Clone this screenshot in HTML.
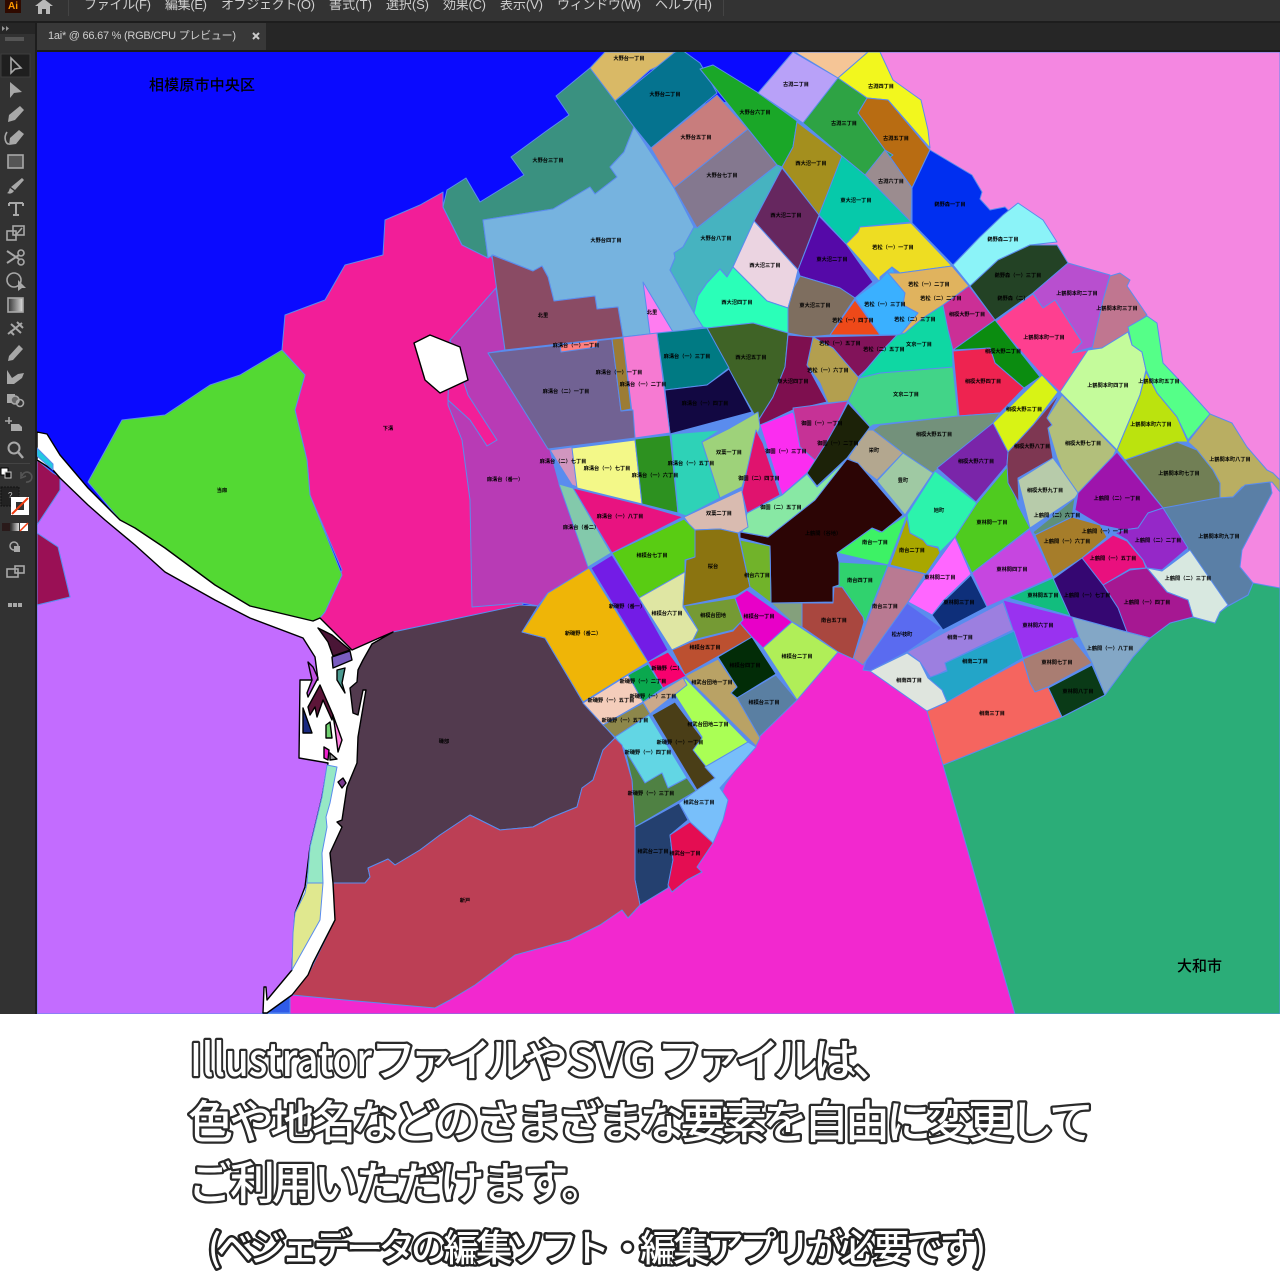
<!DOCTYPE html>
<html lang="ja"><head><meta charset="utf-8"><title>map</title>
<style>
html,body{margin:0;padding:0;background:#fff}
body{width:1280px;height:1280px;overflow:hidden;position:relative;font-family:"Liberation Sans","Noto Sans CJK JP",sans-serif}
svg{position:absolute;left:0;top:0;display:block}
.m polygon{stroke:#5a8cee;stroke-width:1;stroke-linejoin:round}
.l text{font-size:5.2px;fill:#000;text-anchor:middle;font-family:"Noto Sans CJK JP",sans-serif;font-weight:700}
.r polygon{stroke:#000;stroke-width:1.4;stroke-linejoin:round}
.t text{font-family:"Noto Sans CJK JP",sans-serif;font-weight:500;fill:#fff;stroke:#2a2a2a;stroke-width:4.6;paint-order:stroke fill;stroke-linejoin:round;font-size:45px}
.t .b{font-size:37px;stroke:#222;stroke-width:5}
.mn text{font-size:13px;fill:#cfcfcf;font-family:"Liberation Sans","Noto Sans CJK JP",sans-serif}
.ic *{fill:none;stroke:#a8a8a8;stroke-width:1.6}
.ic .f{fill:#a8a8a8;stroke:none}
</style></head><body>
<svg width="1280" height="1280" viewBox="0 0 1280 1280" xmlns="http://www.w3.org/2000/svg">
<rect x="37" y="52" width="1243" height="962" fill="#0a0aff"/>
<g class="m">
<polygon fill="#f487e1" stroke="none" points="838,52 1280,52 1280,610 1100,610 900,200"/>
<polygon fill="#f228cf" stroke="none" points="830,640 900,640 990,740 1016,1014 262,1014 262,900 600,720"/>
<polygon fill="#2bad78" points="943,765 1062,717 1105,695 1133,657 1150,638 1170,623 1193,617 1215,623 1220,612 1228,606 1248,595 1253,583 1280,588 1280,1014 1015,1014"/>
<polygon fill="#c36cff" points="37,605 70,597 58,547 37,533 37,525 60,490 60,478 88,505 105,520 135,545 165,572 215,600 250,618 303,638 315,657 318,680 300,680 299,758 328,763 322,797 310,847 305,887 295,913 292,970 267,1000 262,1014 37,1014"/>
<polygon fill="#9a1055" points="37,460 53,473 60,477 60,490 37,525"/>
<polygon fill="#9a1055" points="37,533 58,547 70,597 37,605"/>
<polygon fill="#f21e98" points="443,192 420,205 385,220 383,255 345,265 325,300 285,315 282,350 305,375 295,410 307,460 310,495 342,570 325,610 320,618 325,623 352,650 370,642 393,632 450,620 522,605 560,560 470,440 512,300 488,250 462,245 443,207"/>
<polygon fill="#5a8cee" stroke="none" points="620,110 760,100 800,110 900,170 930,210 1000,240 1060,270 1120,300 1150,370 1195,430 1210,470 1210,510 1230,580 1150,630 1100,680 1000,720 930,700 860,660 838,648 800,695 760,735 725,785 700,850 660,880 640,830 625,760 590,700 530,632 560,590 560,500 500,360 510,300 520,230 560,150"/>
<polygon fill="#53d933" points="122,420 165,415 210,385 240,375 282,350 305,375 295,410 307,460 310,495 342,575 325,612 320,618 313,621 250,606 215,585 165,548 135,528 120,520 88,482"/>
<polygon fill="#b83bb5" points="450,340 496,288 505,350 488,353 550,450 559,483 589,568 548,593 538,606 522,603 472,607 470,500 462,440 448,405"/>
<polygon fill="#f21e98" stroke="none" points="450,340 468,395 497,440 487,446 470,420 448,400"/>
<polygon fill="#d9b966" points="590,68 605,52 675,52 672,60 650,70 615,101"/>
<polygon fill="#3a9180" points="590,68 556,96 569,115 545,132 511,157 524,175 480,202 466,178 447,190 443,207 462,245 488,258 483,220 553,209 590,187 595,194 617,177 610,167 624,152 634,127 615,101"/>
<polygon fill="#05738f" points="615,101 675,52 682,50 700,63 717,93 651,148 634,127"/>
<polygon fill="#c87d7d" points="651,148 717,95 748,129 674,188"/>
<polygon fill="#84788f" points="674,188 748,129 777,165 697,228"/>
<polygon fill="#1aa728" points="700,69 713,65 757,92 797,121 793,147 782,167 777,165"/>
<polygon fill="#76b3df" points="483,220 553,209 590,187 595,194 617,177 610,167 624,152 634,127 674,188 694,227 683,247 674,253 675,258 670,270 693,310 703,327 673,332 650,334 623,337 618,307 597,309 595,296 554,301 548,277 542,266 533,271 493,255 488,258"/>
<polygon fill="#8a4b64" points="492,255 533,271 542,266 548,277 554,301 595,296 597,309 618,307 623,337 505,350"/>
<polygon fill="#ff7cf0" points="643,282 650,334 673,332"/>
<polygon fill="#46b3c0" points="782,168 754,221 733,267 727,277 720,269 707,283 698,296 694,313 670,270 675,258 674,253 683,247 694,227 697,228 777,165"/>
<polygon fill="#66275f" points="782,168 819,215 798,270 754,221"/>
<polygon fill="#a48f1e" points="797,122 842,156 830,187 819,215 782,167 793,147"/>
<polygon fill="#b8a1f8" points="758,93 793,52 838,78 803,123"/>
<polygon fill="#f5c596" points="795,52 868,52 838,78"/>
<polygon fill="#f2f71e" points="838,78 868,52 880,52 893,80 921,100 928,130 930,148 888,100 867,98"/>
<polygon fill="#b86c12" points="858,113 867,98 888,100 930,150 912,188 885,150"/>
<polygon fill="#2ea344" points="803,123 838,78 867,98 858,113 885,150 893,155 865,175 842,156"/>
<polygon fill="#9b8c8f" points="865,175 885,150 912,188 911,222"/>
<polygon fill="#06c9aa" points="842,156 865,175 911,222 880,225 860,227 858,232 846,244 819,215 830,187"/>
<polygon fill="#eedd22" points="846,244 858,232 860,227 911,223 952,266 900,273 892,267 880,277 880,282"/>
<polygon fill="#5509a8" points="819,216 846,244 873,282 855,298 840,288 800,276 798,270"/>
<polygon fill="#ebd4e1" points="754,221 798,270 794,287 788,308 767,301 733,267"/>
<polygon fill="#2affb8" points="733,267 767,301 788,308 788,333 753,323 707,328 703,327 694,313 698,296 707,283 720,269 727,277"/>
<polygon fill="#7e6e5f" points="800,276 840,288 855,298 830,335 808,337 788,333 788,308 794,287"/>
<polygon fill="#3ab0ff" points="855,298 880,280 892,267 905,293 903,305 918,313 900,335 880,335"/>
<polygon fill="#ee4919" points="855,300 880,335 830,335"/>
<polygon fill="#e0b35e" points="888,273 900,273 952,266 969,286 943,305 923,318 905,333 900,335 918,313 903,305 905,293"/>
<polygon fill="#82135a" points="813,337 900,335 880,355 873,363 857,378 830,347"/>
<polygon fill="#b39f4f" points="813,337 833,348 859,378 848,401 828,403 820,383 807,365"/>
<polygon fill="#3f6326" points="707,328 753,323 788,333 785,367 773,397 758,421 728,368"/>
<polygon fill="#7e0f4f" points="788,335 813,337 807,365 827,402 793,410 759,426 758,421 773,397 785,367"/>
<polygon fill="#007a83" points="657,333 707,328 729,368 707,385 665,390"/>
<polygon fill="#120842" points="665,390 707,385 729,369 752,412 670,434"/>
<polygon fill="#f67ad2" points="623,337 657,333 670,433 635,438"/>
<polygon fill="#716293" points="488,353 612,339 621,411 633,410 635,438 548,449"/>
<polygon fill="#9c7c34" points="612,339 623,338 631,409 621,411"/>
<polygon fill="#ff7f7f" stroke="none" points="560,345 598,340 597,347 561,352"/>
<polygon fill="#42d488" points="848,401 859,378 880,373 953,367 958,416 873,425 870,427"/>
<polygon fill="#0fd7a3" points="943,305 952,330 953,367 880,373 859,378 880,353 897,335 905,333 923,318"/>
<polygon fill="#002ff0" points="930,150 972,175 982,192 980,199 990,210 1005,207 1010,212 980,237 953,265 912,223 912,188"/>
<polygon fill="#8bf3f8" points="953,265 980,237 1003,215 1018,203 1043,220 1057,242 1030,245 998,260 970,286"/>
<polygon fill="#234225" points="970,286 998,260 1030,245 1057,245 1068,263 1033,293 995,320"/>
<polygon fill="#b84fcf" points="1068,263 1110,275 1103,300 1093,347 1072,353 1082,342 1055,300 1043,308 1033,293"/>
<polygon fill="#c07690" points="1110,276 1120,273 1130,280 1127,286 1147,315 1128,332 1102,348 1092,349 1103,300"/>
<polygon fill="#fe3f90" points="995,322 1033,294 1043,308 1055,300 1082,342 1072,353 1088,350 1060,392 1042,375"/>
<polygon fill="#cb2f96" points="943,305 969,286 995,320 953,350 948,330"/>
<polygon fill="#0b8c10" points="953,350 995,320 1040,377 1024,388 995,363 990,348"/>
<polygon fill="#ee2350" points="953,351 990,348 995,363 1024,388 1000,413 959,416"/>
<polygon fill="#d8f315" points="1042,375 1058,392 1033,425 1008,452 993,423"/>
<polygon fill="#73917b" points="880,425 958,416 1000,413 993,423 933,473 903,453 873,430"/>
<polygon fill="#b3a78f" points="867,430 873,430 903,453 877,480 848,458"/>
<polygon fill="#9fc9a3" points="903,453 933,473 905,515 877,481"/>
<polygon fill="#2cf3ac" points="935,471 977,503 955,537 940,552 938,547 927,545 923,540 910,533 907,515"/>
<polygon fill="#7a25a9" points="993,423 1008,452 1007,465 976,502 937,468"/>
<polygon fill="#4fcb1f" points="1007,467 1018,505 1030,528 972,573 955,537 977,503"/>
<polygon fill="#7e3752" points="1008,452 1033,425 1060,393 1047,418 1052,425 1048,428 1053,458 1018,478 1019,503 1008,483 1007,465"/>
<polygon fill="#b2bf7b" points="1062,395 1116,450 1107,470 1078,493 1062,470 1057,458 1048,428 1052,425 1047,418"/>
<polygon fill="#c4fb9b" points="1060,392 1088,350 1102,348 1128,332 1132,345 1142,352 1146,370 1140,395 1117,450"/>
<polygon fill="#55ff88" points="1128,327 1147,316 1157,323 1163,363 1182,383 1210,414 1188,440 1177,417 1157,393 1146,370 1142,352 1132,345"/>
<polygon fill="#bbe30e" points="1146,372 1157,393 1177,417 1188,442 1177,442 1125,460 1117,450 1140,395"/>
<polygon fill="#717f55" points="1125,460 1177,442 1197,450 1213,470 1220,483 1220,500 1163,508"/>
<polygon fill="#b9ae62" points="1188,442 1210,414 1232,423 1247,447 1267,470 1273,473 1280,480 1280,492 1272,482 1242,487 1233,497 1220,498 1220,483 1213,470 1197,450"/>
<polygon fill="#5a7fa6" points="1163,508 1217,498 1233,497 1245,485 1270,482 1272,493 1263,510 1242,550 1240,567 1253,583 1248,595 1228,606 1188,550"/>
<polygon fill="#b7cbaa" points="1018,480 1053,458 1062,470 1078,493 1077,495 1075,498 1030,528"/>
<polygon fill="#5f9079" points="1033,532 1075,498 1072,517 1035,535"/>
<polygon fill="#9e14ac" points="1117,452 1163,508 1148,513 1138,528 1123,530 1100,525 1075,510 1078,493"/>
<polygon fill="#9528c8" points="1163,508 1188,548 1162,570 1147,568 1143,560 1127,540 1115,533 1123,530 1138,528 1148,513"/>
<polygon fill="#d8e8e0" points="1190,550 1228,605 1220,612 1215,623 1193,617 1188,600 1167,592 1147,568 1162,571"/>
<polygon fill="#a61892" points="1147,568 1167,592 1188,600 1193,617 1170,623 1150,638 1127,632 1118,608 1103,585 1130,570"/>
<polygon fill="#e9107e" points="1082,558 1113,535 1127,541 1143,560 1146,568 1130,569 1103,585"/>
<polygon fill="#a67d2a" points="1035,535 1072,517 1100,525 1107,537 1082,558 1053,577"/>
<polygon fill="#350772" points="1053,579 1082,558 1103,585 1118,608 1127,632 1070,617"/>
<polygon fill="#c646e0" points="972,573 1030,529 1053,577 987,607"/>
<polygon fill="#12bd7e" points="1008,598 1053,578 1070,616"/>
<polygon fill="#9932f0" points="1003,600 1072,617 1079,637 1023,658 1013,630"/>
<polygon fill="#a97d72" points="1023,659 1072,638 1092,663 1048,687 1035,692 1030,683"/>
<polygon fill="#0a3a17" points="1048,688 1092,665 1105,695 1062,717"/>
<polygon fill="#83a7c6" points="1072,617 1127,632 1150,638 1133,657 1105,695 1092,663 1079,637"/>
<polygon fill="#9c7fe0" points="907,652 1003,602 1013,630 945,663 947,670 931,678 920,662"/>
<polygon fill="#23a5c8" points="928,678 947,671 945,663 1014,631 1023,658 985,680 947,702 942,690"/>
<polygon fill="#f5655f" points="927,711 947,702 985,680 1023,660 1030,683 1035,692 1048,687 1062,717 943,765"/>
<polygon fill="#dfe5de" points="870,671 907,653 920,662 928,678 942,690 947,702 927,711"/>
<polygon fill="#5a6bf0" points="863,670 868,655 907,603 942,628 907,652 870,671"/>
<polygon fill="#0e2f7a" points="932,615 943,602 971,575 987,607 943,630"/>
<polygon fill="#ff66ff" points="908,602 955,537 971,574 943,601 932,615"/>
<polygon fill="#b97a92" points="853,658 888,566 925,574 908,602 863,665"/>
<polygon fill="#a9a700" points="890,565 907,518 910,533 923,540 927,545 938,548 940,553 926,574"/>
<polygon fill="#3df265" points="837,553 872,528 880,532 907,515 888,565"/>
<polygon fill="#30d26e" points="839,562 888,565 865,623 863,617 842,587 835,587"/>
<polygon fill="#a9473f" points="802,603 833,603 834,587 842,587 863,617 864,622 853,659 838,652 802,627"/>
<polygon fill="#2c0505" points="740,532 768,537 815,500 847,459 858,463 903,515 882,532 872,528 837,553 839,562 839,585 833,587 833,602 771,603 770,546 740,538"/>
<polygon fill="#88e8a4" points="742,532 747,513 782,495 807,474 817,487 847,459 815,500 768,537"/>
<polygon fill="#d9bbb0" points="684,517 742,490 748,527 738,533 720,529 693,530"/>
<polygon fill="#d196bf" points="550,450 572,447 577,487 572,485"/>
<polygon fill="#f3f888" points="572,448 635,440 642,504 577,488"/>
<polygon fill="#2d9120" points="635,439 670,435 678,513 642,504"/>
<polygon fill="#2ed2b7" points="671,434 720,430 702,442 720,498 686,516 678,513"/>
<polygon fill="#9ed27a" points="702,442 730,428 758,412 760,427 742,487 720,498"/>
<polygon fill="#e0136e" points="756,430 763,443 780,495 747,513 742,492"/>
<polygon fill="#fb2df0" points="760,425 793,412 800,430 817,462 807,473 782,495"/>
<polygon fill="#c63296" points="793,408 848,401 838,422 825,447 817,462 800,447"/>
<polygon fill="#1c2208" points="848,403 870,427 847,458 817,486 807,473 825,445 838,422"/>
<polygon fill="#e81380" points="573,488 642,505 683,517 612,553"/>
<polygon fill="#83c9ab" points="559,484 573,488 611,553 588,567"/>
<polygon fill="#59cc13" points="612,553 684,519 695,530 695,557 685,560 685,572 639,598"/>
<polygon fill="#731ce6" points="591,568 612,555 639,598 668,650 648,662"/>
<polygon fill="#dfe6a3" points="639,598 685,572 683,607 698,630 693,640 672,650"/>
<polygon fill="#8b7410" points="695,530 720,529 738,533 750,587 737,595 683,606 686,560 695,557"/>
<polygon fill="#759a34" points="684,606 735,598 743,620 733,630 693,640 698,630"/>
<polygon fill="#523a4e" points="393,632 450,620 520,605 538,606 522,632 545,638 583,702 615,738 603,750 593,780 582,788 577,807 550,818 533,827 500,830 470,815 440,835 420,850 395,865 388,859 368,868 370,877 365,883 333,883 330,853 337,822 342,820 347,787 357,763 358,737 366,690 358,715 353,713 350,688 357,682 358,670 363,660 372,644"/>
<polygon fill="#efb507" points="522,632 548,593 589,568 648,662 583,702 545,638"/>
<polygon fill="#bc5030" points="672,650 693,641 733,631 740,623 752,637 685,675"/>
<polygon fill="#e800c8" points="735,598 747,590 792,622 763,648 752,637 740,623 743,620"/>
<polygon fill="#84a07c" points="771,603 802,603 802,627 792,622"/>
<polygon fill="#71b32a" points="740,540 770,546 771,603 750,587"/>
<polygon fill="#b0ee58" points="763,648 792,622 838,652 797,700"/>
<polygon fill="#022c07" points="718,657 752,637 776,674 737,698 731,693 737,687"/>
<polygon fill="#5a7fa2" points="737,698 776,675 797,700 758,738"/>
<polygon fill="#b9a265" points="685,676 718,659 737,687 731,693 737,698 760,738 756,746"/>
<polygon fill="#aaff55" points="685,678 748,742 705,767 693,750 702,737 675,695"/>
<polygon fill="#cba98a" points="643,702 683,678 687,685 650,714"/>
<polygon fill="#4a3e17" points="652,715 675,702 702,738 693,750 715,778 697,790"/>
<polygon fill="#f8006e" points="648,662 668,652 686,676 663,688"/>
<polygon fill="#0aa84e" points="628,675 648,664 663,688 643,702"/>
<polygon fill="#f4cdbb" points="583,703 628,675 643,702 603,725"/>
<polygon fill="#8d874b" points="603,725 643,703 650,714 615,737"/>
<polygon fill="#62d6e4" points="615,737 649,715 687,778 668,788 662,773 645,783 625,750"/>
<polygon fill="#4f8143" points="625,750 645,783 662,773 668,788 687,778 696,791 635,827 632,780"/>
<polygon fill="#78bffa" points="705,767 748,742 756,747 720,788 728,800 723,820 713,843 690,822 679,803 697,790 715,778"/>
<polygon fill="#24406f" points="635,827 679,803 688,820 670,835 673,860 668,888 640,905 635,880"/>
<polygon fill="#e40d52" points="670,835 690,822 713,843 697,867 702,872 687,880 672,892 668,885 673,860"/>
<polygon fill="#bc3f55" points="333,883 365,883 370,877 368,868 388,859 395,865 420,850 440,835 470,815 500,830 533,827 550,818 577,807 582,788 593,780 603,750 615,738 622,745 632,780 635,827 635,880 640,905 628,918 622,910 600,925 570,940 515,955 475,985 450,1000 435,1008 345,1000 292,995 308,975 335,920"/>
<polygon fill="#2f5be8" points="290,995 267,1013 290,1013"/>
</g>
<g class="r">
<polygon fill="#fff" points="37,432 47,434 60,455 88,488 120,520 135,528 165,548 215,585 250,606 313,621 320,618 325,623 352,650 370,642 393,632 372,644 363,660 358,670 357,682 350,688 353,713 358,715 363,690 366,690 358,737 357,763 347,787 342,820 337,822 342,827 330,853 333,883 335,920 313,963 308,975 292,995 267,1013 263,1013 264,987 266,987 267,1000 292,970 295,913 305,887 310,847 322,797 328,763 299,758 300,680 318,680 315,657 303,638 250,618 215,600 165,572 135,545 105,520 88,505 60,478 53,470 37,460"/>
<polygon fill="#fff" points="414,343 430,335 460,347 468,380 440,393 425,380"/>
</g>
<g class="m">
<polygon fill="#96e8c5" points="327,765 337,767 330,803 326,817 327,827 322,853 323,883 307,883 310,847 322,797"/>
<polygon fill="#e0e88f" points="307,883 323,883 320,920 292,970 293,933 295,913 305,893"/>
<polygon fill="#22c8e0" stroke="none" points="37,448 53,464 53,470 37,456"/>
</g>
<g class="r" style="stroke-width:1">
<polygon fill="#4a1536" points="318,628 332,635 350,650 333,656 328,642"/>
<polygon fill="#7a5cc0" points="332,657 350,651 352,660 333,668"/>
<polygon fill="#4b9a90" points="337,670 345,668 342,683 345,693 337,680"/>
<polygon fill="#c050e0" points="308,662 313,667 318,678 308,697 307,693 312,680"/>
<polygon fill="#5c1538" points="320,685 333,715 332,720 323,700 317,717 315,707 310,715 308,707"/>
<polygon fill="#ff80e0" points="333,715 342,740 338,752 335,728"/>
<polygon fill="#1a2a80" points="303,708 312,733 303,733"/>
<polygon fill="#70d070" points="326,725 330,722 332,738 326,738"/>
<polygon fill="#ee22cc" points="324,747 329,750 328,760 324,758"/>
<polygon fill="#999" points="330,753 337,759 330,760"/>
<polygon fill="#7a3a90" points="338,782 343,778 346,783 342,788"/>
</g>
<g class="l">
<text x="629" y="60">大野台一丁目</text><text x="665" y="96">大野台二丁目</text><text x="548" y="162">大野台三丁目</text><text x="696" y="139">大野台五丁目</text><text x="755" y="114">大野台六丁目</text><text x="722" y="177">大野台七丁目</text><text x="606" y="242">大野台四丁目</text><text x="716" y="240">大野台八丁目</text><text x="796" y="86">古淵二丁目</text><text x="881" y="88">古淵四丁目</text><text x="844" y="125">古淵三丁目</text><text x="896" y="140">古淵五丁目</text><text x="891" y="183">古淵六丁目</text><text x="950" y="206">鵜野森一丁目</text><text x="1003" y="241">鵜野森二丁目</text><text x="1018" y="277">鵜野森（一）三丁目</text><text x="1013" y="300">鵜野森（二）</text>
<text x="811" y="165">西大沼一丁目</text><text x="856" y="202">東大沼一丁目</text><text x="786" y="217">西大沼二丁目</text><text x="832" y="261">東大沼二丁目</text><text x="765" y="267">西大沼三丁目</text><text x="737" y="304">西大沼四丁目</text><text x="815" y="307">東大沼三丁目</text><text x="893" y="249">若松（一）一丁目</text><text x="929" y="286">若松（一）二丁目</text><text x="941" y="300">若松（二）二丁目</text><text x="885" y="306">若松（一）三丁目</text><text x="915" y="321">若松（二）三丁目</text><text x="853" y="322">若松（一）四丁目</text><text x="840" y="345">若松（一）五丁目</text><text x="884" y="351">若松（二）五丁目</text><text x="828" y="372">若松（一）六丁目</text><text x="751" y="359">西大沼五丁目</text><text x="793" y="383">東大沼四丁目</text><text x="822" y="425">御園（一）一丁目</text><text x="838" y="445">御園（一）二丁目</text><text x="786" y="453">御園（一）三丁目</text><text x="759" y="480">御園（二）四丁目</text><text x="781" y="509">御園（二）五丁目</text><text x="729" y="454">双葉一丁目</text><text x="719" y="515">双葉二丁目</text><text x="919" y="346">文京一丁目</text><text x="906" y="396">文京二丁目</text><text x="874" y="452">栄町</text><text x="903" y="482">豊町</text><text x="939" y="512">旭町</text>
<text x="967" y="316">相模大野一丁目</text><text x="1003" y="353">相模大野二丁目</text><text x="983" y="383">相模大野四丁目</text><text x="1024" y="411">相模大野三丁目</text><text x="934" y="436">相模大野五丁目</text><text x="976" y="463">相模大野六丁目</text><text x="1032" y="448">相模大野八丁目</text><text x="1083" y="445">相模大野七丁目</text><text x="1045" y="492">相模大野九丁目</text>
<text x="1044" y="339">上鶴間本町一丁目</text><text x="1077" y="295">上鶴間本町二丁目</text><text x="1117" y="310">上鶴間本町三丁目</text><text x="1108" y="387">上鶴間本町四丁目</text><text x="1159" y="383">上鶴間本町五丁目</text><text x="1151" y="426">上鶴間本町六丁目</text><text x="1179" y="475">上鶴間本町七丁目</text><text x="1230" y="461">上鶴間本町八丁目</text><text x="1219" y="538">上鶴間本町九丁目</text><text x="1117" y="500">上鶴間（二）一丁目</text><text x="1158" y="542">上鶴間（二）二丁目</text><text x="1188" y="580">上鶴間（二）三丁目</text><text x="1057" y="517">上鶴間（二）六丁目</text><text x="1067" y="543">上鶴間（一）六丁目</text><text x="1105" y="533">上鶴間（一）一丁目</text><text x="1113" y="560">上鶴間（一）五丁目</text><text x="1147" y="604">上鶴間（一）四丁目</text><text x="1087" y="597">上鶴間（一）七丁目</text><text x="1110" y="650">上鶴間（一）八丁目</text>
<text x="992" y="524">東林間一丁目</text><text x="940" y="579">東林間二丁目</text><text x="959" y="604">東林間三丁目</text><text x="1012" y="571">東林間四丁目</text><text x="1043" y="597">東林間五丁目</text><text x="1038" y="627">東林間六丁目</text><text x="1057" y="664">東林間七丁目</text><text x="1078" y="693">東林間八丁目</text><text x="960" y="639">相南一丁目</text><text x="975" y="663">相南二丁目</text><text x="992" y="715">相南三丁目</text><text x="909" y="682">相南四丁目</text><text x="902" y="636">松が枝町</text><text x="875" y="544">南台一丁目</text><text x="912" y="552">南台二丁目</text><text x="885" y="608">南台三丁目</text><text x="860" y="582">南台四丁目</text><text x="834" y="622">南台五丁目</text>
<text x="759" y="618">相模台一丁目</text><text x="797" y="658">相模台二丁目</text><text x="764" y="704">相模台三丁目</text><text x="745" y="667">相模台四丁目</text><text x="705" y="649">相模台五丁目</text><text x="667" y="615">相模台六丁目</text><text x="652" y="557">相模台七丁目</text><text x="713" y="617">相模台団地</text><text x="713" y="568">桜台</text><text x="757" y="577">相台六丁目</text><text x="823" y="535">上鶴間（谷地）</text>
<text x="576" y="347">麻溝台（一）一丁目</text><text x="619" y="374">麻溝台（一）一丁目</text><text x="643" y="386">麻溝台（一）二丁目</text><text x="687" y="358">麻溝台（一）三丁目</text><text x="705" y="405">麻溝台（一）四丁目</text><text x="691" y="465">麻溝台（一）五丁目</text><text x="655" y="477">麻溝台（一）六丁目</text><text x="607" y="470">麻溝台（一）七丁目</text><text x="620" y="518">麻溝台（一）八丁目</text><text x="566" y="393">麻溝台（二）一丁目</text><text x="563" y="463">麻溝台（二）七丁目</text><text x="505" y="481">麻溝台（番一）</text><text x="581" y="529">麻溝台（番二）</text><text x="543" y="317">北里</text><text x="652" y="314">北里</text><text x="388" y="430">下溝</text><text x="222" y="492">当麻</text><text x="444" y="743">磯部</text><text x="465" y="902">新戸</text>
<text x="627" y="608">新磯野（番一）</text><text x="583" y="635">新磯野（番二）</text><text x="667" y="670">新磯野（二）</text><text x="643" y="683">新磯野（一）二丁目</text><text x="653" y="698">新磯野（一）三丁目</text><text x="611" y="702">新磯野（一）五丁目</text><text x="625" y="722">新磯野（一）五丁目</text><text x="680" y="744">新磯野（一）一丁目</text><text x="648" y="754">新磯野（一）四丁目</text><text x="651" y="795">新磯野（一）三丁目</text><text x="712" y="684">相武台団地一丁目</text><text x="708" y="726">相武台団地二丁目</text><text x="699" y="804">相武台三丁目</text><text x="653" y="853">相武台二丁目</text><text x="685" y="855">相武台一丁目</text>
</g>
<text x="149" y="90" font-size="15" font-family="Noto Sans CJK JP,sans-serif" font-weight="500" fill="#000" textLength="106">相模原市中央区</text>
<text x="1177" y="971" font-size="15" font-family="Noto Sans CJK JP,sans-serif" font-weight="500" fill="#000">大和市</text>

<!-- top UI -->
<rect x="0" y="0" width="1280" height="21" fill="#333"/>
<rect x="0" y="21" width="1280" height="2" fill="#1d1d1d"/>
<rect x="0" y="23" width="1280" height="29" fill="#262626"/>
<rect x="37" y="23" width="229" height="28" fill="#383838"/>
<rect x="37" y="50" width="1243" height="2" fill="#1a1a1a"/>
<rect x="5" y="0" width="16" height="13" fill="#2f0a00"/>
<text x="8" y="9" font-size="10" font-weight="700" fill="#ff9a00" font-family="Liberation Sans,sans-serif">Ai</text>
<path d="M35 6 L44 -1 L53 6 L50 6 L50 14 L46 14 L46 9 L42 9 L42 14 L38 14 L38 6Z" fill="#b9b9b9"/>
<rect x="68" y="0" width="1" height="16" fill="#444"/><rect x="723" y="0" width="1" height="16" fill="#444"/>
<g class="mn">
<text x="84" y="9" textLength="67">ファイル(F)</text><text x="165" y="9" textLength="42">編集(E)</text><text x="221" y="9" textLength="94">オブジェクト(O)</text><text x="329" y="9" textLength="43">書式(T)</text><text x="386" y="9" textLength="43">選択(S)</text><text x="443" y="9" textLength="43">効果(C)</text><text x="500" y="9" textLength="43">表示(V)</text><text x="557" y="9" textLength="84">ウィンドウ(W)</text><text x="655" y="9" textLength="57">ヘルプ(H)</text>
</g>
<text x="48" y="39" font-size="11" fill="#cfcfcf" font-family="Liberation Sans,Noto Sans CJK JP,sans-serif" textLength="188">1ai* @ 66.67 % (RGB/CPU プレビュー)</text>
<path d="M253 33 L259 39 M259 33 L253 39" stroke="#ccc" stroke-width="2"/>

<!-- toolbar -->
<rect x="0" y="23" width="35" height="991" fill="#323232"/>
<rect x="35" y="23" width="2" height="991" fill="#1d1d1d"/>
<rect x="0" y="23" width="35" height="11" fill="#262626"/>
<path d="M2 26 L5 28.5 L2 31Z M6 26 L9 28.5 L6 31Z" fill="#999"/>
<rect x="5" y="37" width="19" height="4" fill="#555"/>
<rect x="1" y="54" width="29" height="23" fill="#1f1f1f" stroke="#3e3e3e"/>
<g class="ic">
<path d="M11 58 L11 73 L15 69 L21 68Z"/>
<path class="f" d="M10 82 L10 98 L14 93 L22 92Z"/>
<path class="f" d="M20 106 L24 110 L15 120 L8 122 L9 115Z"/>
<path class="f" d="M19 130 L24 134 L16 144 L9 145 L10 138Z"/><path d="M7 132 C3 138 6 144 9 144"/>
<rect x="8" y="155" width="15" height="13" style="fill:#555"/>
<path class="f" d="M22 178 L24 180 L15 190 L11 187Z M10 188 L14 191 C12 194 9 194 7 193 C9 192 9 190 10 188Z"/>
<path d="M9 203 H23 M16 203 V215 M13 215 H19 M9 203 V206 M23 203 V206" style="stroke-width:2"/>
<rect x="7" y="231" width="9" height="9"/><rect x="13" y="226" width="11" height="9"/><path d="M15 236 L22 228"/>
<circle cx="21" cy="253" r="3"/><circle cx="21" cy="262" r="3"/><path d="M7 251 L19 259 M7 263 L19 255" style="stroke-width:2"/>
<circle cx="14" cy="280" r="7"/><path class="f" d="M18 280 L18 291 L22 288 L26 288Z"/>
<defs><linearGradient id="g" x1="0" x2="1"><stop offset="0" stop-color="#333"/><stop offset="1" stop-color="#ddd"/></linearGradient></defs>
<rect x="8" y="298" width="15" height="14" style="fill:url(#g)"/>
<path d="M8 334 L22 323 M11 324 L21 333 M10 331 L14 335 M17 322 L23 328" style="stroke-width:2"/>
<path class="f" d="M19 345 L23 349 L13 360 L8 361 L9 356Z"/>
<path class="f" d="M7 370 L12 378 L18 374 L24 373 L22 378 L14 384 L7 384Z"/>
<rect x="7" y="394" width="8" height="9" class="f"/><circle cx="15" cy="400" r="4" style="fill:#666"/><circle cx="20" cy="403" r="3.5"/>
<path d="M5 421 H12 M9 417 V424"/><path class="f" d="M11 424 H19 L22 427 V431 H11Z"/>
<circle cx="14" cy="448" r="5.5" style="stroke-width:2"/><path d="M18 452 L23 458" style="stroke-width:2.5"/>
<path d="M22 476 A5 5 0 1 1 26 482 M21 472 L21 478 L26 476" style="stroke:#555"/>
<rect x="15" y="566" width="9" height="7"/><rect x="7" y="569" width="11" height="8"/>
<path class="f" d="M8 603 h4 v4 h-4z M13 603 h4 v4 h-4z M18 603 h4 v4 h-4z"/>
<circle cx="14" cy="546" r="4" style="stroke-width:1.5"/><rect x="14" y="546" width="6" height="6" class="f"/>
</g>
<rect x="0" y="463" width="30" height="1" fill="#444"/>
<rect x="1" y="468" width="7" height="7" fill="#fff" stroke="#000"/><rect x="5" y="472" width="6" height="6" fill="#111" stroke="#ccc"/>
<rect x="1" y="487" width="18" height="19" fill="#222" stroke="#111" stroke-dasharray="2 1"/>
<text x="8" y="498" font-size="8" fill="#ccc">?</text>
<rect x="11" y="497" width="18" height="18" fill="#fff"/><rect x="16" y="502" width="8" height="8" fill="#333"/>
<path d="M12 514 L28 498" stroke="#f03c10" stroke-width="2"/>
<rect x="2" y="523" width="8" height="8" fill="#2a1a1a"/><rect x="11" y="523" width="8" height="8" fill="url(#g)"/><rect x="20" y="523" width="8" height="8" fill="#fff"/>
<path d="M20 531 L28 523" stroke="#f03c10" stroke-width="1.5"/>

<!-- bottom -->
<rect x="0" y="1014" width="1280" height="266" fill="#fff"/>
<g class="t">
<text x="190" y="1076" textLength="182" lengthAdjust="spacingAndGlyphs">Illustrator</text>
<text x="371" y="1076" textLength="197">ファイルや</text>
<text x="568" y="1076" textLength="86" lengthAdjust="spacingAndGlyphs">SVG</text>
<text x="657" y="1076" textLength="240">ファイルは、</text>
<text x="188" y="1138" textLength="906">色や地名などのさまざまな要素を自由に変更して</text>
<text x="188" y="1199" textLength="418">ご利用いただけます。</text>
<text x="208" y="1261" class="b" textLength="402">(ベジェデータの編集ソフト</text>
<text x="609" y="1261" class="b">・</text>
<text x="640" y="1261" class="b" textLength="346">編集アプリが必要です)</text>
</g>
</svg>
</body></html>
